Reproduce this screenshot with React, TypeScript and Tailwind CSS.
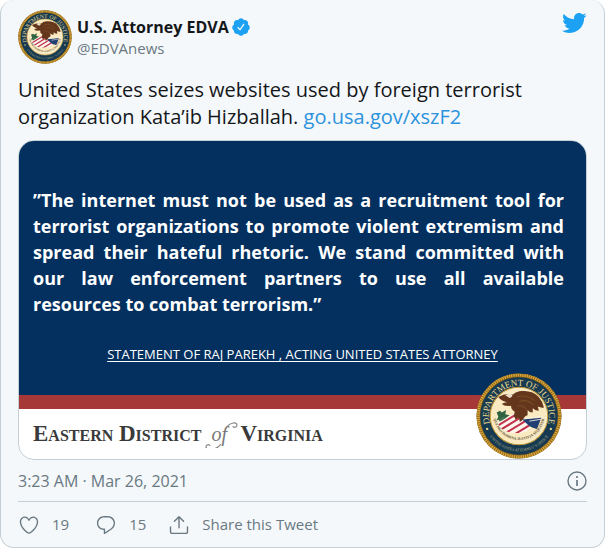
import { ReactNode } from "react";

/* ================= ICONS ================= */
function Icon({ className, children }: { className: string; children: ReactNode }) {
  return (
    <svg viewBox="0 0 24 24" fill="currentColor" aria-hidden="true" className={className}>
      {children}
    </svg>
  );
}

/* ================= JUSTICE SEAL ================= */
function Seal({ id, className }: { id: string; className: string }) {
  return (
    <svg viewBox="0 0 100 100" role="img" aria-label="Department of Justice seal" className={className}>
      <defs>
        <path id={`${id}-top`} d="M 18 64 A 35 35 0 1 1 82 64" />
        <path id={`${id}-bottom`} d="M 12 67 A 42 42 0 0 0 88 67" />
        <path id={`${id}-motto`} d="M 20 48 A 30 30 0 0 0 80 48" />
        <clipPath id={`${id}-shield`}>
          <path d="M25 58 L46 46 L67 60 L59 68 Q42 73 30 65 Z" />
        </clipPath>
      </defs>

      {/* rope edge and blue ring */}
      <circle cx="50" cy="50" r="49.5" fill="#7c5a1a" />
      <circle cx="50" cy="50" r="47.5" fill="none" stroke="#d9a83c" strokeWidth="3.4" />
      <circle cx="50" cy="50" r="47.5" fill="none" stroke="#8a6118" strokeWidth="3.4" strokeDasharray="1 1.6" />
      <circle cx="50" cy="50" r="45" fill="#153a52" />
      <circle cx="50" cy="50" r="33.5" fill="#faeac2" stroke="#c39a3c" strokeWidth="1.2" />

      <text fill="#ecd98f" fontSize="10.5" fontFamily="Liberation Serif, serif">
        <textPath href={`#${id}-top`} startOffset="50%" textAnchor="middle">
          DEPARTMENT OF JUSTICE
        </textPath>
      </text>
      <text fill="#b5b183" fontSize="4.5" fontFamily="Liberation Serif, serif">
        <textPath href={`#${id}-bottom`} startOffset="50%" textAnchor="middle">
          UNITED STATES ATTORNEY’S OFFICE
        </textPath>
      </text>
      <circle cx="13" cy="65" r="1.4" fill="#e3d08c" />
      <circle cx="87" cy="65" r="1.4" fill="#e3d08c" />

      {/* olive branch */}
      <path d="M24 46 l4 -2 2 2 5 -3 -1 5 5 1 -4 3 -2 4 -5 -2 -4 1 2 -4 z" fill="#2f6240" />
      <path d="M26 54 l6 -3 6 2 -4 5 -6 -1 z" fill="#3f7450" />

      {/* striped shield */}
      <g clipPath={`url(#${id}-shield)`}>
        <rect x="24" y="44" width="46" height="30" fill="#fdf5ec" />
        <path
          d="M24 62 L52 45 M27 67 L58 48 M34 70 L64 52 M42 73 L70 56 M50 76 L76 60"
          stroke="#c0304a"
          strokeWidth="2.3"
        />
      </g>
      <path d="M54 54 L76 52 L71 65 Q64 64 60 60 Z" fill="#223f73" />
      <path d="M58 53 L78 50 M62 56 L80 53" stroke="#f4f0e2" strokeWidth="1" />

      {/* eagle */}
      <path
        d="M26 28 Q34 23 43 25 Q48 20 56 21 Q67 21 73 28 Q78 34 79 40 Q76 41 72 39 L73 44 Q69 44 66 41 L66 46 Q62 46 60 43 L60 49 Q56 50 55 54 L51 57 L50 52 L46 54 L44 50 L45 45 Q40 42 41 38 Q33 39 30 36 Q33 34 36 34 Q28 32 26 28 Z"
        fill="#64361c"
      />
      <path d="M48 28 Q58 24 68 32 M50 33 Q60 30 67 37 M48 39 Q54 36 59 43" fill="none" stroke="#7d4c28" strokeWidth="1.2" />
      <path d="M34 26 Q38 23 42 25 Q43 28 39 29 Z" fill="#e9dfc8" />

      <text fill="#5d5236" fontSize="4.4" fontWeight="700" fontFamily="Liberation Serif, serif">
        <textPath href={`#${id}-motto`} startOffset="50%" textAnchor="middle">
          QUI PRO DOMINA JUSTITIA SEQUITUR
        </textPath>
      </text>
    </svg>
  );
}

/* ================= BANNER CARD ================= */
function StatementCard() {
  return (
    <div className="relative overflow-hidden rounded-2xl border border-[#c4cfd6] bg-white">
      <div className="bg-[#03305f] px-[14px] pt-[46px] pb-8 text-white">
        <p className="mr-2 text-justify text-lg leading-[26px] font-bold">
          ”The internet must not be used as a recruitment tool for terrorist organizations to
          promote violent extremism and spread their hateful rhetoric. We stand committed with our
          law enforcement partners to use all available resources to combat terrorism.”
        </p>
        <p className="mt-7 text-center text-[13px] leading-[18px] underline underline-offset-2 [text-decoration-skip-ink:none]">
          STATEMENT OF RAJ PAREKH , ACTING UNITED STATES ATTORNEY
        </p>
      </div>
      <div className="h-[14px] bg-[#a63838]" />
      <div className="flex h-[50px] items-center px-[14px] font-['Liberation_Serif',serif] text-[23px] text-[#3a3a3a]">
        <span className="font-bold [font-variant:small-caps]">Eastern District</span>
        <span className="relative w-[39px] pl-[10px] text-xl italic text-[#777]">
          of
          <svg
            viewBox="0 0 38 28"
            fill="none"
            stroke="#888"
            strokeWidth="1.2"
            aria-hidden="true"
            className="absolute top-0 left-0 h-7 w-[38px]"
          >
            <path d="M25 9 C27 3 36 1 36 5 C36 8 32 8 32 6" />
            <path d="M20 24 C16 30 6 31 5 27 C5 24 9 24 9 26" />
          </svg>
        </span>
        <span className="font-bold [font-variant:small-caps]">Virginia</span>
      </div>
      <Seal id="banner" className="absolute right-6 bottom-0 size-[86px]" />
    </div>
  );
}

/* ================= TWEET ================= */
export default function App() {
  return (
    <article className="rounded-[14px] border border-t-0 border-[#c4cfd6] bg-[#f5f8fa] px-[17px] pt-[10px] font-['Open_Sans',sans-serif] text-[#14171a]">
      <header className="flex items-start">
        <a href="#profile" aria-label="U.S. Attorney EDVA">
          <Seal id="avatar" className="size-[54px]" />
        </a>
        <div className="ml-[5px] mt-[6px] flex-1">
          <a href="#profile" className="flex items-center gap-[2px] text-base leading-[22px] font-bold">
            U.S. Attorney EDVA
            <Icon className="size-5 text-[#1da1f2]">
              <path d="M22.5 12.5c0-1.58-.875-2.95-2.148-3.6.154-.435.238-.905.238-1.4 0-2.21-1.71-3.998-3.818-3.998-.47 0-.92.084-1.336.25C14.818 2.415 13.51 1.5 12 1.5s-2.816.917-3.437 2.25c-.415-.165-.866-.25-1.336-.25-2.11 0-3.818 1.79-3.818 4 0 .494.083.964.237 1.4-1.272.65-2.147 2.018-2.147 3.6 0 1.495.782 2.798 1.942 3.486-.02.17-.032.34-.032.514 0 2.21 1.708 4 3.818 4 .47 0 .92-.086 1.335-.25.62 1.334 1.926 2.25 3.437 2.25 1.512 0 2.818-.916 3.437-2.25.415.163.865.248 1.336.248 2.11 0 3.818-1.79 3.818-4 0-.174-.012-.344-.033-.513 1.158-.687 1.943-1.99 1.943-3.484zm-6.616-3.334l-4.334 6.5c-.145.217-.382.334-.625.334-.143 0-.288-.04-.416-.126l-.115-.094-2.415-2.415c-.293-.293-.293-.768 0-1.06s.768-.294 1.06 0l1.77 1.767 3.825-5.74c.23-.345.696-.436 1.04-.207.346.23.44.696.21 1.04z" />
            </Icon>
          </a>
          <a href="#profile" className="block text-[15px] leading-5 text-[#697882]">
            @EDVAnews
          </a>
        </div>
        <a href="#twitter" aria-label="Twitter">
          <Icon className="size-[26px] text-[#1da1f2]">
            <path d="M23.643 4.937c-.835.37-1.732.62-2.675.733.962-.576 1.7-1.49 2.048-2.578-.9.534-1.897.922-2.958 1.13-.85-.904-2.06-1.47-3.4-1.47-2.572 0-4.658 2.086-4.658 4.66 0 .364.042.718.12 1.06-3.873-.195-7.304-2.05-9.602-4.868-.4.69-.63 1.49-.63 2.342 0 1.616.823 3.043 2.072 3.878-.764-.025-1.482-.234-2.11-.583v.06c0 2.257 1.605 4.14 3.737 4.568-.392.106-.803.162-1.227.162-.3 0-.593-.028-.877-.082.593 1.85 2.313 3.198 4.352 3.234-1.595 1.25-3.604 1.995-5.786 1.995-.376 0-.747-.022-1.112-.065 2.062 1.323 4.51 2.093 7.14 2.093 8.57 0 13.255-7.098 13.255-13.254 0-.2-.005-.402-.014-.602.91-.658 1.7-1.477 2.323-2.41z" />
          </Icon>
        </a>
      </header>

      <p className="mt-3 mb-[10px] max-w-[520px] text-xl leading-[27px]">
        United States seizes websites used by foreign terrorist organization Kata’ib Hizballah.{" "}
        <a href="#link" className="text-[#2b92dd]">go.usa.gov/xszF2</a>
      </p>

      <StatementCard />

      <div className="flex h-[42px] items-center justify-between border-b border-[#c4cfd6] text-base text-[#697882]">
        <time>3:23 AM · Mar 26, 2021</time>
        <button type="button" aria-label="Twitter Ads info and privacy">
          <svg viewBox="0 0 20 20" fill="none" stroke="currentColor" strokeWidth="1.4" className="size-5">
            <circle cx="10" cy="10" r="9" />
            <path d="M10 9 V15" strokeWidth="1.7" />
            <circle cx="10" cy="6" r="1.1" fill="currentColor" stroke="none" />
          </svg>
        </button>
      </div>

      <footer className="flex h-[45px] items-center text-[15px] text-[#697882]">
        <button type="button" aria-label="Like, 19" className="flex items-center gap-3">
          <Icon className="size-[22px]">
            <path d="M12 21.638h-.014C9.403 21.59 1.95 14.856 1.95 8.478c0-3.064 2.525-5.754 5.403-5.754 2.29 0 3.83 1.58 4.646 2.73.814-1.148 2.354-2.73 4.645-2.73 2.88 0 5.404 2.69 5.404 5.755 0 6.376-7.454 13.11-10.037 13.157H12zM7.354 4.225c-2.08 0-3.903 1.988-3.903 4.255 0 5.74 7.034 11.596 8.55 11.658 1.518-.062 8.55-5.917 8.55-11.658 0-2.267-1.823-4.255-3.903-4.255-2.528 0-3.94 2.936-3.952 2.965-.23.562-1.156.562-1.387 0-.014-.03-1.425-2.965-3.954-2.965z" />
          </Icon>
          19
        </button>
        <button type="button" aria-label="Reply, 15" className="ml-[26px] flex items-center gap-3">
          <Icon className="size-[22px]">
            <path d="M14.046 2.242l-4.148-.01h-.002c-4.374 0-7.8 3.427-7.8 7.802 0 4.098 3.186 7.206 7.465 7.37v3.828c0 .108.044.286.12.403.142.225.384.347.632.347.138 0 .277-.038.402-.118.264-.168 6.473-4.14 8.088-5.506 1.902-1.61 3.04-3.97 3.043-6.312v-.017c-.006-4.367-3.43-7.787-7.8-7.788zm3.787 12.972c-1.134.96-4.862 3.405-6.772 4.643V16.67c0-.414-.335-.75-.75-.75h-.396c-3.66 0-6.318-2.476-6.318-5.886 0-3.534 2.768-6.302 6.3-6.302l4.147.01h.002c3.532 0 6.3 2.766 6.302 6.296-.003 1.91-.942 3.844-2.514 5.176z" />
          </Icon>
          15
        </button>
        <button type="button" className="ml-[22px] flex items-center gap-3">
          <Icon className="size-[22px]">
            <path d="M17.53 7.47l-5-5c-.293-.293-.768-.293-1.06 0l-5 5c-.294.293-.294.768 0 1.06s.767.294 1.06 0l3.72-3.72V15c0 .414.336.75.75.75s.75-.336.75-.75V4.81l3.72 3.72c.146.147.338.22.53.22s.384-.072.53-.22c.293-.293.293-.767 0-1.06z" />
            <path d="M19.708 21.944H4.292C3.028 21.944 2 20.916 2 19.652V14c0-.414.336-.75.75-.75s.75.336.75.75v5.652c0 .437.355.792.792.792h15.416c.437 0 .792-.355.792-.792V14c0-.414.336-.75.75-.75s.75.336.75.75v5.652c0 1.264-1.028 2.292-2.292 2.292z" />
          </Icon>
          Share this Tweet
        </button>
      </footer>
    </article>
  );
}
